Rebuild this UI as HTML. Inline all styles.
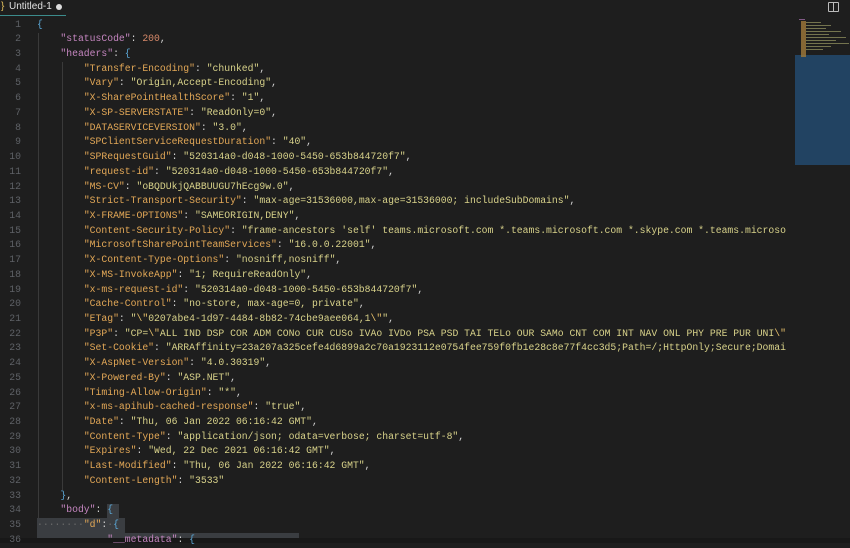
<!DOCTYPE html>
<html><head><meta charset="utf-8"><style>
html,body{margin:0;padding:0;width:850px;height:543px;overflow:hidden;background:#1e1e1e;font-family:"Liberation Mono",monospace;}
.tabbar{position:absolute;left:0;top:0;width:850px;height:16px;background:#1e1e1e;}
.tab{position:absolute;left:0;top:0;height:15px;width:66px;border-bottom:1px solid #3c8c8c;font-family:"Liberation Sans",sans-serif;font-size:10px;color:#e0e0e0;line-height:14px;}
.tab .br{color:#e3c05c;position:absolute;left:1px;top:0}
.tab .t{position:absolute;left:9px;top:0}
.tab .dot{position:absolute;left:56px;top:4px;width:6px;height:6px;border-radius:50%;background:#ddd}
.split{position:absolute;left:828px;top:2px;width:9px;height:8px;border:1px solid #bbb;border-radius:1px}
.split:after{content:"";position:absolute;left:4px;top:0;width:1px;height:8px;background:#bbb}
.ln{position:absolute;left:0;width:21px;text-align:right;color:#5e6166;font-size:9.75px;}
.code{position:absolute;left:37px;white-space:pre;font-size:9.75px;color:#d4d4d4;}
.row{position:absolute;height:14.72px;line-height:14.72px;}
.k1{color:#c586c0}.k2{color:#e3a857}.s{color:#d8d28a}.n{color:#d98a6a}.b{color:#5ba7d6}.e{color:#e8c06a}
.g{position:absolute;width:1px;background:#3a3a3a}
.sel{position:absolute;background:#3a3d41}
.mm{position:absolute;left:795px;top:55px;width:55px;height:110px;background:#234a6e;opacity:.85}
</style></head><body>
<div class="tabbar"><div class="tab"><span class="br">}</span><span class="t">Untitled-1</span><span class="dot"></span></div><div class="split"></div></div>
<div class="g" style="left:38px;top:33px;height:505px"></div>
<div class="g" style="left:62px;top:62px;height:428px"></div>
<div class="sel" style="left:107px;top:504px;width:12px;height:14px"></div>
<div class="sel" style="left:37px;top:518px;width:88px;height:15px"></div>
<div class="sel" style="left:37px;top:533px;width:262px;height:10px"></div>
<div class="mm"></div>
<svg style="position:absolute;left:796px;top:17px" width="54" height="145">
<g fill="#8a8a5a" opacity=".8">
<rect x="3" y="2" width="6" height="1" fill="#9a6aa0"/>
<rect x="5" y="5" width="20" height="1"/><rect x="5" y="8" width="30" height="1"/><rect x="5" y="11" width="25" height="1"/><rect x="5" y="14" width="40" height="1"/><rect x="5" y="17" width="28" height="1"/><rect x="5" y="20" width="45" height="1"/><rect x="5" y="23" width="35" height="1"/><rect x="5" y="26" width="48" height="1"/><rect x="5" y="29" width="30" height="1"/><rect x="5" y="32" width="22" height="1"/>
<rect x="5" y="4" width="5" height="36" fill="#a07a3a"/>
</g></svg>
<div style="position:absolute;left:0;top:538px;width:850px;height:5px;background:#181818"></div>
<div id="w"></div>
<script>
var L=[
'<span class="b">{</span>',
'    <span class="k1">"statusCode"</span>: <span class="n">200</span>,',
'    <span class="k1">"headers"</span>: <span class="b">{</span>',
['Transfer-Encoding','chunked'],['Vary','Origin,Accept-Encoding'],['X-SharePointHealthScore','1'],['X-SP-SERVERSTATE','ReadOnly=0'],['DATASERVICEVERSION','3.0'],['SPClientServiceRequestDuration','40'],['SPRequestGuid','520314a0-d048-1000-5450-653b844720f7'],['request-id','520314a0-d048-1000-5450-653b844720f7'],['MS-CV','oBQDUkjQABBUUGU7hEcg9w.0'],['Strict-Transport-Security','max-age=31536000,max-age=31536000; includeSubDomains'],['X-FRAME-OPTIONS','SAMEORIGIN,DENY'],
['Content-Security-Policy','frame-ancestors \'self\' teams.microsoft.com *.teams.microsoft.com *.skype.com *.teams.microso',1],
['MicrosoftSharePointTeamServices','16.0.0.22001'],['X-Content-Type-Options','nosniff,nosniff'],['X-MS-InvokeApp','1; RequireReadOnly'],['x-ms-request-id','520314a0-d048-1000-5450-653b844720f7'],['Cache-Control','no-store, max-age=0, private'],
'        <span class="k2">"ETag"</span>: <span class="s">"<span class="e">\\"</span>0207abe4-1d97-4484-8b82-74cbe9aee064,1<span class="e">\\"</span>"</span>,',
'        <span class="k2">"P3P"</span>: <span class="s">"CP=<span class="e">\\"</span>ALL IND DSP COR ADM CONo CUR CUSo IVAo IVDo PSA PSD TAI TELo OUR SAMo CNT COM INT NAV ONL PHY PRE PUR UNI<span class="e">\\"</span></span>',
['Set-Cookie','ARRAffinity=23a207a325cefe4d6899a2c70a1923112e0754fee759f0fb1e28c8e77f4cc3d5;Path=/;HttpOnly;Secure;Domai',1],
['X-AspNet-Version','4.0.30319'],['X-Powered-By','ASP.NET'],['Timing-Allow-Origin','*'],['x-ms-apihub-cached-response','true'],['Date','Thu, 06 Jan 2022 06:16:42 GMT'],['Content-Type','application/json; odata=verbose; charset=utf-8'],['Expires','Wed, 22 Dec 2021 06:16:42 GMT'],['Last-Modified','Thu, 06 Jan 2022 06:16:42 GMT'],['Content-Length','3533',2],
'    <span class="b">}</span>,',
'    <span class="k1">"body"</span>: <span class="b">{</span>',
'<span style="color:#6a6a6a">········</span><span class="k2">"d"</span>:<span style="color:#6a6a6a">·</span><span class="b">{</span>',
'            <span class="k1">"__metadata"</span>: <span class="b">{</span>'
];
var h='';
for(var i=0;i<L.length;i++){var t=L[i];
if(typeof t!='string'){
 if(t[2]==1){t='        <span class="k2">"'+t[0]+'"</span>: <span class="s">"'+t[1]+'</span>';}
 else t='        <span class="k2">"'+t[0]+'"</span>: <span class="s">"'+t[1]+'"</span>'+(t[2]?'':',');}
var y=17.6+i*14.72;
h+='<div class="row ln" style="top:'+y+'px">'+(i+1)+'</div><div class="row code" style="top:'+y+'px">'+t+'</div>';}
document.getElementById('w').innerHTML=h;
</script>
</body></html>
